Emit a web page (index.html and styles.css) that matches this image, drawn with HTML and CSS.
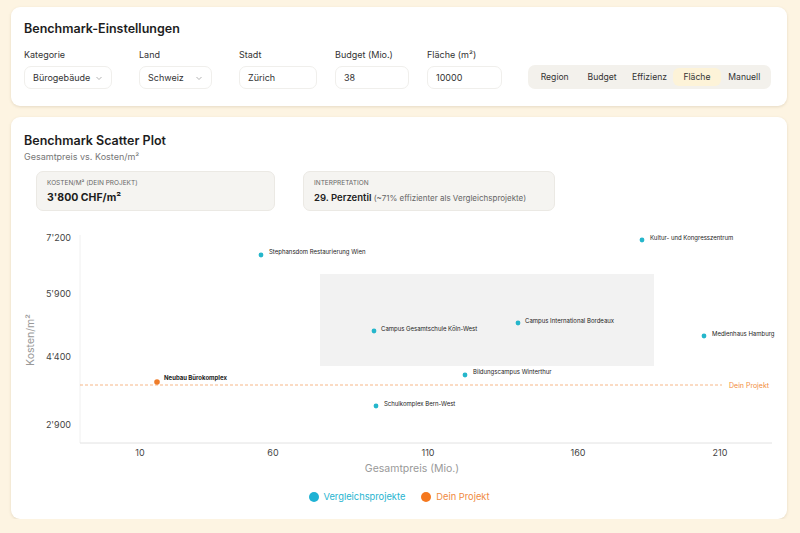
FILE: index.html
```html
<!DOCTYPE html>
<html lang="de">
  <head>
    <meta charset="UTF-8" />
    <meta name="viewport" content="width=device-width, initial-scale=1.0" />
    <title>Benchmark</title>
    <link rel="stylesheet" href="styles.css">
  </head>
  <body>
    <section class="card settings">
      <h2>Benchmark-Einstellungen</h2>
      <div class="fields">
        <div class="field select-field">
          <label>Kategorie</label>
          <div class="input select w88">Bürogebäude
            <svg width="8" height="8" viewBox="0 0 8 8"><path d="M1.5 3l2.5 2.5L6.5 3" fill="none" stroke="#aaa" stroke-width="0.9"/></svg>
          </div>
        </div>
        <div class="field select-field">
          <label>Land</label>
          <div class="input select w73">Schweiz
            <svg width="8" height="8" viewBox="0 0 8 8"><path d="M1.5 3l2.5 2.5L6.5 3" fill="none" stroke="#aaa" stroke-width="0.9"/></svg>
          </div>
        </div>
        <div class="field">
          <label>Stadt</label>
          <div class="input w78">Zürich</div>
        </div>
        <div class="field">
          <label>Budget (Mio.)</label>
          <div class="input w74">38</div>
        </div>
        <div class="field">
          <label>Fläche (m²)</label>
          <div class="input w75">10000</div>
        </div>
        <div class="segments">
          <span>Region</span>
          <span>Budget</span>
          <span>Effizienz</span>
          <span class="active">Fläche</span>
          <span>Manuell</span>
        </div>
      </div>
    </section>

    <section class="card plot">
      <h2>Benchmark Scatter Plot</h2>
      <p class="subtitle">Gesamtpreis vs. Kosten/m²</p>
      <div class="stats">
        <div class="stat first">
          <div class="stat-label">Kosten/m² (Dein Projekt)</div>
          <div class="stat-value">3'800 CHF/m²</div>
        </div>
        <div class="stat second">
          <div class="stat-label">Interpretation</div>
          <div class="stat-text"><b>29. Perzentil</b> (~71% effizienter als Vergleichsprojekte)</div>
        </div>
      </div>

      <svg class="chart" width="750" height="256" viewBox="0 0 750 256">
        <rect x="296" y="52" width="334" height="92" fill="#f2f2f2"/>
        <line x1="56" y1="13" x2="56" y2="221" stroke="#f0f0f0"/>
        <line x1="56" y1="221" x2="748" y2="221" stroke="#e2e2e2"/>

        <g class="tick" text-anchor="end">
          <text x="47" y="19">7'200</text>
          <text x="47" y="75">5'900</text>
          <text x="47" y="138">4'400</text>
          <text x="47" y="206">2'900</text>
        </g>
        <g class="tick" text-anchor="middle">
          <text x="116" y="234">10</text>
          <text x="249" y="234">60</text>
          <text x="404" y="234">110</text>
          <text x="554" y="234">160</text>
          <text x="696" y="234">210</text>
        </g>
        <text class="axis-title" x="388" y="250" text-anchor="middle">Gesamtpreis (Mio.)</text>
        <text class="axis-title" transform="translate(10 118) rotate(-90)" text-anchor="middle">Kosten/m²</text>

        <line x1="56" y1="163" x2="698" y2="163" stroke="#f5a46a" stroke-width="0.8" stroke-dasharray="3 2"/>
        <text class="ref-label" x="705" y="166">Dein Projekt</text>

        <g class="dots" fill="#25b6cb">
          <circle cx="237" cy="33" r="2.4"/>
          <circle cx="618" cy="18" r="2.4"/>
          <circle cx="350" cy="109" r="2.4"/>
          <circle cx="494" cy="101" r="2.4"/>
          <circle cx="680" cy="114" r="2.4"/>
          <circle cx="441" cy="153" r="2.4"/>
          <circle cx="352" cy="184" r="2.4"/>
        </g>
        <circle cx="133" cy="160" r="2.8" fill="#ef7d2a"/>

        <g class="point-label">
          <text x="245" y="32">Stephansdom Restaurierung Wien</text>
          <text x="626" y="18">Kultur- und Kongresszentrum</text>
          <text x="357" y="109">Campus Gesamtschule Köln-West</text>
          <text x="501" y="101">Campus International Bordeaux</text>
          <text x="688" y="114">Medienhaus Hamburg</text>
          <text x="449" y="152">Bildungscampus Winterthur</text>
          <text x="360" y="184">Schulkomplex Bern-West</text>
          <text x="140" y="158" font-weight="700">Neubau Bürokomplex</text>
        </g>
      </svg>

      <div class="legend">
        <span class="item blue"><i></i>Vergleichsprojekte</span>
        <span class="item orange"><i></i>Dein Projekt</span>
      </div>
    </section>
  </body>
</html>
```

FILE: styles.css
```css
* {
  box-sizing: border-box;
}

body {
  margin: 0;
  padding: 7px 13px 0 11px;
  font-family: Inter, "Noto Sans", sans-serif;
  background-color: #fdf4e2;
  color: #222;
}

.card {
  background-color: #fff;
  border-radius: 9px;
  box-shadow: 0 1px 3px rgba(120, 100, 60, 0.18);
  padding: 13px 13px 0 13px;
}

h2 {
  margin: 0;
  font-size: 12.5px;
  font-weight: 600;
  line-height: 17px;
  color: #1d1d1d;
}

.settings {
  height: 99px;
}

.fields {
  display: flex;
  align-items: flex-end;
  gap: 18px;
  margin-top: 12px;
}

.field label {
  display: block;
  font-size: 9px;
  line-height: 12px;
  color: #333;
  margin-bottom: 5px;
}

.select-field {
  margin-right: 9px;
}

.input {
  height: 23px;
  border: 1px solid #f0efec;
  border-radius: 7px;
  font-size: 9px;
  line-height: 21px;
  padding: 0 8px;
  color: #333;
}

.select {
  display: flex;
  justify-content: space-between;
  align-items: center;
}

.w88 { width: 88px; }
.w73 { width: 73px; }
.w78 { width: 78px; }
.w74 { width: 74px; }
.w75 { width: 75px; }

.segments {
  margin-left: 8px;
  width: 243px;
  height: 24px;
  background-color: #f3f1ec;
  border-radius: 7px;
  display: flex;
  align-items: center;
  padding: 0 3px;
  font-size: 8.6px;
  font-weight: 400;
  color: #333;
}

.segments span {
  flex: 1;
  text-align: center;
  line-height: 18px;
  border-radius: 6px;
}

.segments .active {
  background-color: #fdf3d8;
}

.plot {
  margin-top: 11px;
  height: 402px;
}

.plot h2 {
  margin-top: 2px;
}

.subtitle {
  margin: 2px 0 0;
  font-size: 9px;
  color: #777;
}

.stats {
  display: flex;
  gap: 28px;
  margin: 9px 0 0 12px;
}

.stat {
  height: 40px;
  background-color: #f5f4f1;
  border: 1px solid #ebe9e4;
  border-radius: 7px;
  padding: 7px 10px;
}

.stat.first { width: 239px; }
.stat.second { width: 252px; }

.stat-label {
  font-size: 6.5px;
  text-transform: uppercase;
  color: #666;
  line-height: 9px;
}

.stat-value {
  font-size: 10.5px;
  font-weight: 700;
  margin-top: 3px;
  color: #1d1d1d;
}

.stat-text {
  font-size: 8px;
  margin-top: 4px;
  color: #666;
}

.stat-text b {
  font-size: 9.5px;
  font-weight: 600;
  color: #222;
}

.chart {
  display: block;
  margin-top: 11px;
  overflow: visible;
}

.tick text {
  font-size: 9px;
  fill: #444;
}

.axis-title {
  font-size: 10.5px;
  fill: #999;
}

.ref-label {
  font-size: 7px;
  fill: #f28c3c;
}

.point-label text {
  font-size: 6px;
  fill: #222;
}

.legend {
  display: flex;
  justify-content: center;
  gap: 16px;
  margin-top: 13px;
  font-size: 9.3px;
}

.legend .item {
  display: flex;
  align-items: center;
  gap: 5px;
}

.legend i {
  width: 10px;
  height: 10px;
  border-radius: 50%;
}

.blue { color: #27b4d0; }
.blue i { background-color: #1fb2d4; }
.orange { color: #ef8a42; }
.orange i { background-color: #f5781e; }
```
